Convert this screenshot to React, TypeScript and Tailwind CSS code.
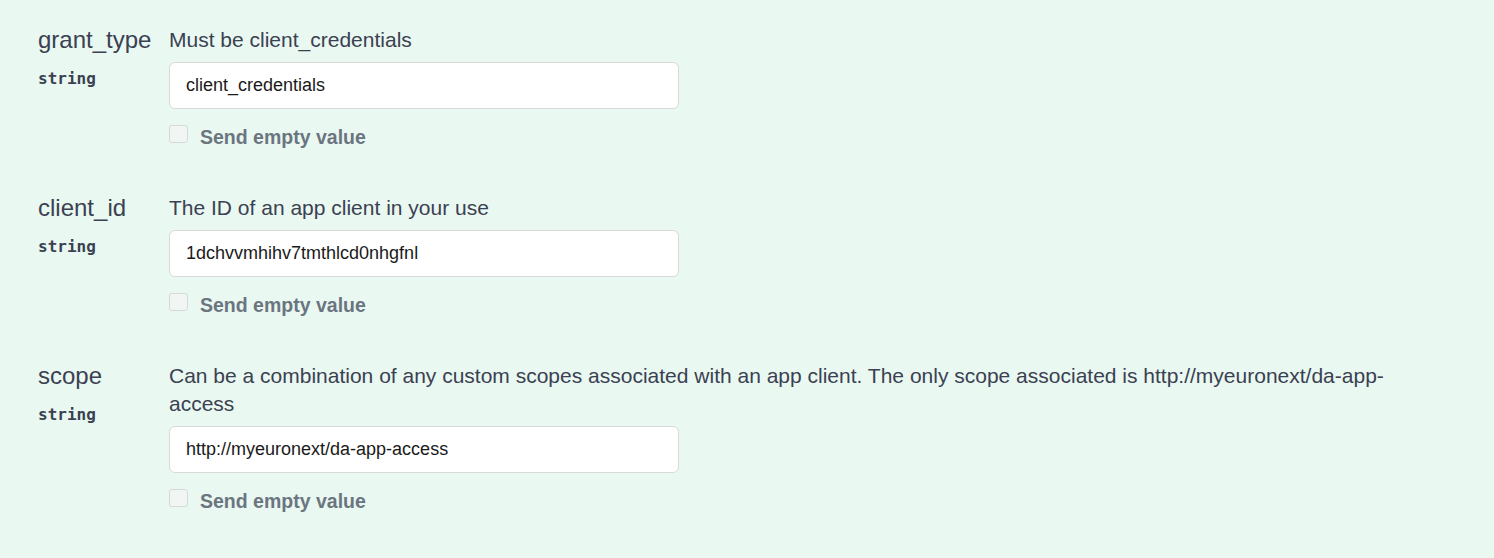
const params = [
  {
    name: "grant_type",
    type: "string",
    description: "Must be client_credentials",
    value: "client_credentials",
  },
  {
    name: "client_id",
    type: "string",
    description: "The ID of an app client in your use",
    value: "1dchvvmhihv7tmthlcd0nhgfnl",
  },
  {
    name: "scope",
    type: "string",
    description:
      "Can be a combination of any custom scopes associated with an app client. The only scope associated is http://myeuronext/da-app-access",
    value: "http://myeuronext/da-app-access",
  },
];

function ParamRow({ name, type, description, value }: (typeof params)[number]) {
  return (
    <div className="flex pb-[46px]">
      <div className="w-[131px] shrink-0">
        <div className="text-[24px] leading-[28px] text-[#3b4151] font-['Liberation_Sans',Arial,sans-serif]">
          {name}
        </div>
        <div className="mt-[15px] text-[16px] leading-[19px] font-bold text-[#3b4151] font-['DejaVu_Sans_Mono',monospace]">
          {type}
        </div>
      </div>
      <div className="flex-1 min-w-0">
        <p className="text-[21px] leading-[28px] text-[#3b4151] font-['Liberation_Sans',Arial,sans-serif]">
          {description}
        </p>
        <input
          type="text"
          defaultValue={value}
          className="mt-[8px] block h-[47px] w-[510px] rounded-[6px] border border-[#d9d9d9] bg-white pl-[16px] pr-[15px] text-[18px] text-[#1a1a1a] font-['Liberation_Sans',Arial,sans-serif] outline-none"
        />
        <label className="mt-[16px] flex items-start gap-[12px]">
          <span className="block h-[18px] w-[19px] rounded-[3px] border border-[#d3dad7] bg-[#f1f5f3]" />
          <span className="mt-[1px] text-[19.5px] leading-[22px] font-bold text-[#6b7580] font-['Liberation_Sans',Arial,sans-serif]">
            Send empty value
          </span>
        </label>
      </div>
    </div>
  );
}

export default function App() {
  return (
    <div className="min-h-[558px] w-full bg-[#e9f8f1] pt-[26px] pl-[38px] pr-[64px]">
      {params.map((p) => (
        <ParamRow key={p.name} {...p} />
      ))}
    </div>
  );
}
